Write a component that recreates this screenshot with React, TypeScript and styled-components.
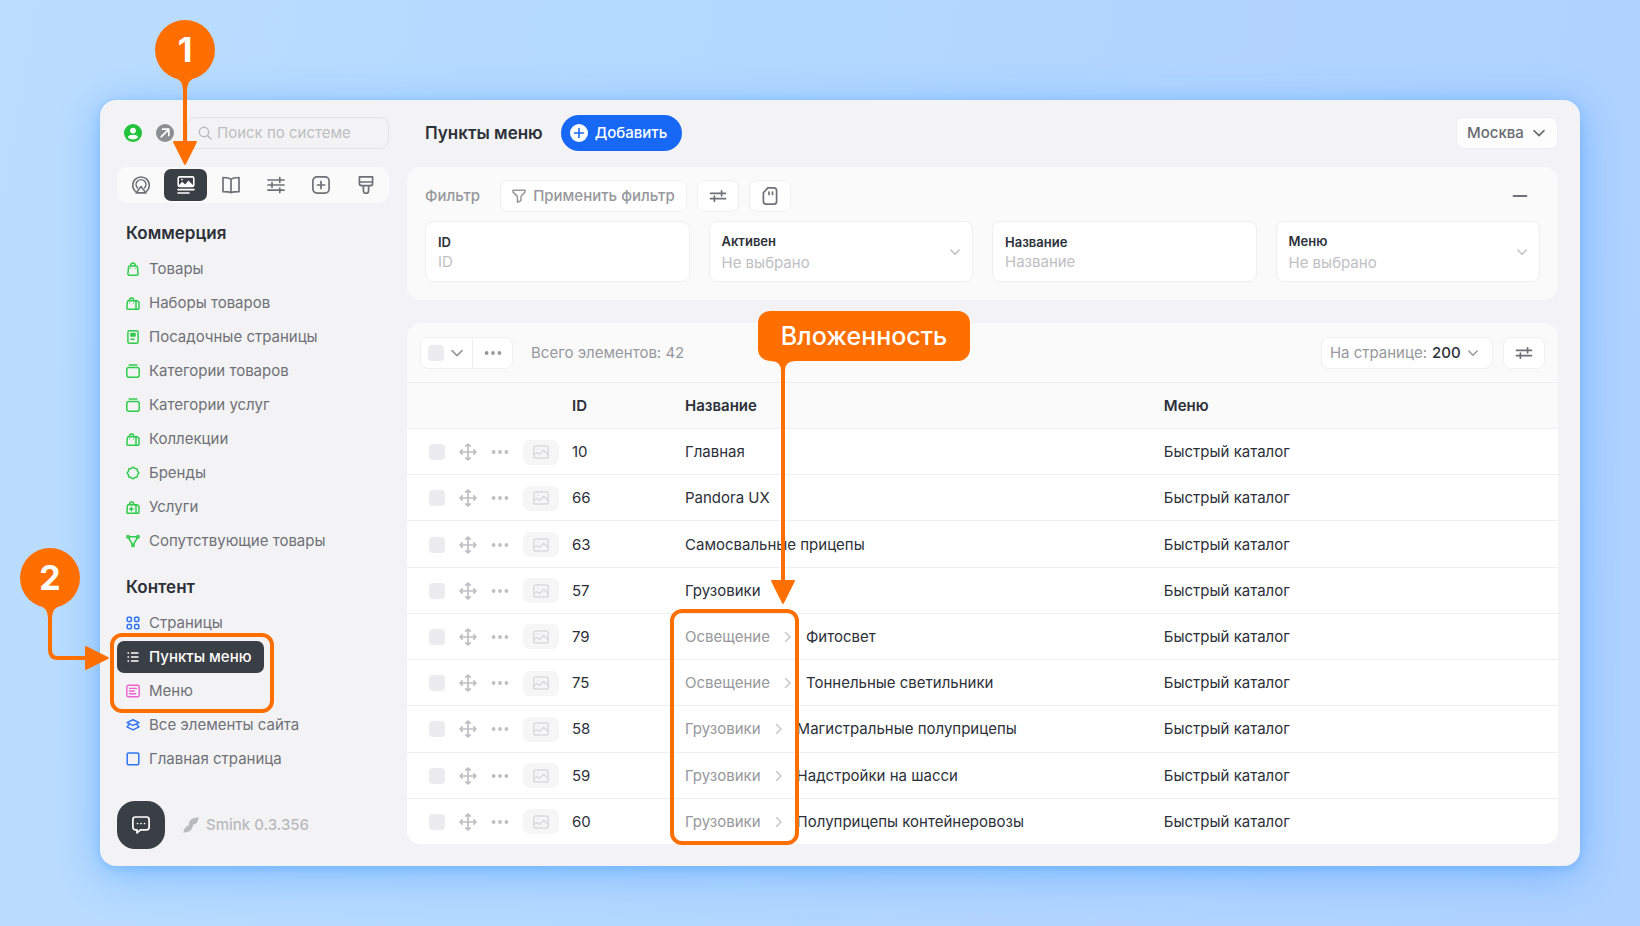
import React from 'react';
import styled, { createGlobalStyle, css } from 'styled-components';

const ORANGE = '#ff6f00';
const INK = '#2c3038';
const MUTED = '#6f7076';
const GREY = '#97989c';
const LINE = '#efeff1';
const DARK = '#3a3e45';

const GlobalStyle = createGlobalStyle`
  *, *::before, *::after { box-sizing: border-box; }
  body { margin: 0; }
  body, button, input, select {
    font-family: Inter, "Liberation Sans", sans-serif;
    font-size: 15px;
    line-height: 20px;
    color: ${INK};
  }
  button, input, select { margin: 0; padding: 0; border: 0; background: none; }
  button, select { cursor: pointer; }
  select { appearance: none; outline: none; }
  svg { display: block; flex: none; }
`;

const Page = styled.div`
  display: flex;
  min-height: 100vh;
  padding: 100px 60px 60px 100px;
  background: linear-gradient(100deg, #bbddff 0%, #b4d9ff 35%, #aed1ff 100%);
`;

const Window = styled.div`
  position: relative;
  flex: 1;
  display: grid;
  grid-template-columns: 272px minmax(0, 1fr);
  column-gap: 18px;
  padding: 14px 22px 22px 17px;
  border-radius: 16px;
  background: #f3f3f5;
  box-shadow: 0 8px 40px rgba(40, 140, 255, 0.42), 0 2px 8px rgba(40, 140, 255, 0.25);
`;

/* Sidebar */

const Sidebar = styled.aside`
  display: flex;
  flex-direction: column;
`;

const TopRow = styled.div`
  display: flex;
  align-items: center;
  height: 38px;
`;

const RoundButton = styled.button`
  display: flex;
  margin-left: 7px;
  margin-right: 7px;
`;

const SearchBox = styled.label`
  display: flex;
  flex: 1;
  min-width: 0;
  align-items: center;
  gap: 5px;
  height: 32px;
  margin-left: 6px;
  padding: 0 10px;
  border: 1px solid #e4e4e7;
  border-radius: 9px;
  color: #bdbdc1;
`;

const SearchInput = styled.input`
  flex: 1;
  min-width: 0;
  outline: none;
  &::placeholder { color: #bdbdc1; opacity: 1; }
`;

const Tabs = styled.div`
  display: flex;
  justify-content: space-between;
  margin-top: 15px;
  padding: 2px;
  border-radius: 10px;
  background: #fafafb;
`;

const Tab = styled.button<{ $active?: boolean }>`
  display: flex;
  align-items: center;
  justify-content: center;
  width: 43px;
  height: 32px;
  border-radius: 7px;
  color: ${(p) => (p.$active ? '#fff' : MUTED)};
  background: ${(p) => (p.$active ? DARK : 'none')};
`;

const Nav = styled.nav`
  display: flex;
  flex-direction: column;
`;

const NavTitle = styled.h2`
  margin: 18px 0 8px 9px;
  font-size: 17px;
  line-height: 24px;
  font-weight: 600;
`;

const NavList = styled.ul`
  display: flex;
  flex-direction: column;
  align-items: flex-start;
  gap: 2px;
  margin: 0;
  padding: 0;
  list-style: none;
`;

const NavLink = styled.a<{ $active?: boolean }>`
  display: flex;
  align-items: center;
  gap: 9px;
  height: 32px;
  padding: 0 13px 0 9px;
  border-radius: 7px;
  color: ${MUTED};
  text-decoration: none;
  ${(p) =>
    p.$active &&
    css`
      background: ${DARK};
      color: #fff;
      font-weight: 500;
    `}
`;

const SideFooter = styled.div`
  display: flex;
  align-items: center;
  gap: 18px;
  margin-top: auto;
  margin-bottom: -5px;
`;

const ChatButton = styled.button`
  display: flex;
  align-items: center;
  justify-content: center;
  width: 48px;
  height: 48px;
  border-radius: 18px;
  background: ${DARK};
  color: #fff;
`;

const Version = styled.span`
  display: flex;
  align-items: center;
  gap: 7px;
  color: #b9babd;
  font-weight: 500;
`;

/* Main column */

const Main = styled.main`
  display: flex;
  flex-direction: column;
  min-width: 0;
`;

const Header = styled.header`
  display: flex;
  align-items: center;
  gap: 18px;
  height: 38px;
  padding-left: 18px;
`;

const Title = styled.h1`
  margin: 0;
  font-size: 17px;
  line-height: 24px;
  font-weight: 600;
`;

const AddButton = styled.button`
  display: flex;
  align-items: center;
  gap: 7px;
  height: 36px;
  padding: 0 15px 0 9px;
  border-radius: 18px;
  background: #1769f5;
  color: #fff;
  font-weight: 500;
`;

const Spacer = styled.div`
  flex: 1;
`;

const SelectBox = styled.label<{ $tone?: string }>`
  display: flex;
  align-items: center;
  gap: 5px;
  height: 32px;
  padding: 0 12px 0 8px;
  border: 1px solid ${LINE};
  border-radius: 8px;
  background: #fff;
  color: ${GREY};
  select { font-weight: 500; color: ${INK}; }
`;

const CityBox = styled(SelectBox)`
  gap: 8px;
  padding: 0 11px 0 10px;
  background: #fdfdfd;
  select { color: #6a6b71; }
`;

const Panel = styled.section`
  border-radius: 14px;
  background: #fafafb;
`;

const FilterPanel = styled(Panel)`
  margin-top: 15px;
  padding: 13px 18px 18px;
`;

const FilterBar = styled.div`
  display: flex;
  align-items: center;
  gap: 10px;
  padding-right: 12px;
`;

const FilterName = styled.span`
  margin-right: 10px;
  color: ${GREY};
  font-weight: 500;
`;

const ToolButton = styled.button`
  display: flex;
  align-items: center;
  justify-content: center;
  gap: 7px;
  min-width: 40px;
  height: 32px;
  padding: 0 11px;
  border: 1px solid ${LINE};
  border-radius: 8px;
  background: #fff;
  color: ${GREY};
  font-weight: 500;
`;

const PlainButton = styled.button`
  display: flex;
  color: ${MUTED};
`;

const Fields = styled.div`
  display: grid;
  grid-template-columns: repeat(4, minmax(0, 1fr));
  gap: 19px;
  margin-top: 9px;
`;

const Field = styled.label`
  display: flex;
  align-items: center;
  height: 61px;
  padding: 0 10px 0 12px;
  border: 1px solid ${LINE};
  border-radius: 8px;
  background: #fff;
  color: #c0c0c4;
`;

const FieldBody = styled.span<{ $gap?: number }>`
  display: flex;
  flex: 1;
  min-width: 0;
  flex-direction: column;
  gap: ${(p) => p.$gap || 0}px;
  input, select { width: 100%; outline: none; color: #c0c0c4; }
  input::placeholder { color: #c0c0c4; opacity: 1; }
`;

const FieldName = styled.span`
  font-size: 13px;
  line-height: 20px;
  font-weight: 600;
  color: ${INK};
`;

const TablePanel = styled(Panel)`
  display: flex;
  flex: 1;
  flex-direction: column;
  margin-top: 23px;
  overflow: hidden;
`;

const Toolbar = styled.div`
  display: flex;
  align-items: center;
  gap: 10px;
  height: 59px;
  padding: 0 13px;
`;

const Split = styled.div`
  display: flex;
  margin-right: 8px;
  border: 1px solid ${LINE};
  border-radius: 8px;
  background: #fff;
  color: ${GREY};
`;

const SplitPart = styled.div`
  display: flex;
  align-items: center;
  gap: 6px;
  height: 30px;
  padding: 0 8px 0 7px;
  & + button { border-left: 1px solid ${LINE}; }
`;

const SplitButton = styled.button`
  display: flex;
  align-items: center;
  padding: 0 10px 0 11px;
  color: ${GREY};
`;

const Check = styled.input`
  appearance: none;
  width: 16px;
  height: 16px;
  border-radius: 4px;
  background: #ececee;
`;

const Total = styled.span`
  color: ${GREY};
`;

const Table = styled.table`
  flex: 1;
  width: 100%;
  table-layout: fixed;
  border-collapse: separate;
  border-spacing: 0;
  tbody { background: #fff; }
  th, td {
    height: 46px;
    padding: 1px 0 0;
    border-top: 1px solid ${LINE};
    text-align: left;
    vertical-align: middle;
    white-space: nowrap;
  }
  th { font-weight: 600; }
`;

const ColTools = styled.col`
  width: 165px;
`;
const ColId = styled.col`
  width: 113px;
`;
const ColName = styled.col`
  width: 41.6%;
`;

const RowTools = styled.div`
  display: flex;
  align-items: center;
  gap: 14px;
  padding-left: 22px;
  color: #bfbfc3;
`;

const Thumb = styled.span`
  display: flex;
  align-items: center;
  justify-content: center;
  width: 36px;
  height: 25px;
  border-radius: 7px;
  background: #f6f6f7;
  color: #dadadd;
`;

const Crumbs = styled.span`
  display: flex;
  align-items: center;
`;

const Parent = styled.span`
  display: flex;
  align-items: center;
  gap: 13px;
  margin-right: 13px;
  color: ${GREY};
`;

/* Callouts that lie over the window */

const Overlay = styled.div<{ $x: number; $y: number }>`
  position: absolute;
  left: ${(p) => p.$x}px;
  top: ${(p) => p.$y}px;
  pointer-events: none;
  color: ${ORANGE};
`;

const Frame = styled(Overlay)<{ $w: number; $h: number }>`
  width: ${(p) => p.$w}px;
  height: ${(p) => p.$h}px;
  border: 4px solid ${ORANGE};
  border-radius: 12px;
`;

const PinNumber = styled.span`
  position: absolute;
  left: 0;
  top: 0;
  width: 60px;
  line-height: 60px;
  text-align: center;
  font-size: 34px;
  font-weight: 700;
  color: #fff;
`;

const Tip = styled.div`
  width: 212px;
  border-radius: 12px;
  background: ${ORANGE};
  color: #fff;
  font-size: 25px;
  line-height: 50px;
  font-weight: 500;
  text-align: center;
`;

const TipTail = styled.svg`
  margin-left: 13px;
`;

/* Icons */

type IconProps = { size?: number; color?: string; width?: number; children: React.ReactNode };

const Icon = ({ size = 18, color = 'currentColor', width = 1.6, children }: IconProps) => (
  <svg
    width={size}
    height={size}
    viewBox={`0 0 ${size} ${size}`}
    fill="none"
    stroke={color}
    strokeWidth={width}
    strokeLinecap="round"
    strokeLinejoin="round"
    aria-hidden="true"
  >
    {children}
  </svg>
);

const Chevron = ({ color }: { color?: string }) => (
  <Icon size={14} color={color} width={1.6}>
    <path d="M2 4.600 7 9.600l5-5" />
  </Icon>
);

const SmallChevron = ({ color }: { color?: string }) => (
  <Icon size={14} color={color} width={1.4}>
    <path d="M2.800 5 7 9.200 11.200 5" />
  </Icon>
);

const Dots = ({ color }: { color?: string }) => (
  <Icon size={18} color={color} width={0}>
    <g fill="currentColor">
      <circle cx="2.600" cy="9" r="1.900" />
      <circle cx="9" cy="9" r="1.900" />
      <circle cx="15.400" cy="9" r="1.900" />
    </g>
  </Icon>
);

const Sliders = () => (
  <Icon width={1.7} color="#707177">
    <path d="M1.500 6.300h15M12.600 3.800v5M1.500 11.700h15M5.400 9.200v5" />
  </Icon>
);

const Move = () => (
  <Icon width={1.7}>
    <path d="M9 1.200v15.600M1.200 9h15.600M6.800 3.200 9 1l2.200 2.200M6.800 14.800 9 17l2.200-2.200M3.200 6.800 1 9l2.200 2.200M14.800 6.800 17 9l-2.200 2.200" />
  </Icon>
);

const GREEN = '#2fcb4b';
const BLUE = '#2f74f6';

const bagsBody = (
  <path d="M2.300 4.800h6.400l1.300 1.300v6.300a.8.8 0 0 1-.8.8H1.800a.9.900 0 0 1-.9-.9l.5-6.700a1 1 0 0 1 .9-.8zM3.400 4.600a2.200 2.600 0 0 1 4.400 0M9.400 4.800h1.900l1.700 1.600v5.600a1.200 1.200 0 0 1-1.200 1.200H9.400" />
);

const glyphs: Record<string, React.ReactNode> = {
  bag: (
    <Icon size={14} color={GREEN} width={1.500}>
      <path d="M3.600 4h6.800a1 1 0 0 1 1 .9l.7 7a1.200 1.200 0 0 1-1.200 1.300H3.100a1.200 1.200 0 0 1-1.200-1.300l.7-7a1 1 0 0 1 1-.9zM4.700 3.800a2.300 2.800 0 0 1 4.600 0" />
      <path d="M4.900 6.300v.3M9.100 6.300v.3" strokeWidth="1" />
    </Icon>
  ),
  bags: (
    <Icon size={14} color={GREEN} width={1.500}>
      {bagsBody}
      <path d="M3.700 6.900v.2M7.500 6.900v.2" strokeWidth="1" />
    </Icon>
  ),
  landing: (
    <Icon size={14} color={GREEN} width={1.500}>
      <rect x="1.900" y="0.800" width="10.200" height="12.500" rx="1.600" />
      <rect x="5" y="3.600" width="4" height="2.400" fill={GREEN} />
      <path d="M5 9.300h3" />
    </Icon>
  ),
  category: (
    <Icon size={14} color={GREEN} width={1.500}>
      <rect x="0.800" y="3.600" width="12.400" height="9.600" rx="1.900" />
      <path d="M3.200 0.900h7.600" />
    </Icon>
  ),
  brand: (
    <Icon size={14} color={GREEN} width={1.500}>
      <path d="M7 1.200 8.900 2.400l2.200.5.5 2.200L12.800 7l-1.200 1.900-.5 2.200-2.200.5L7 12.800l-1.900-1.200-2.200-.5-.5-2.200L1.200 7l1.200-1.900.5-2.200 2.200-.5z" />
    </Icon>
  ),
  service: (
    <Icon size={14} color={GREEN} width={1.500}>
      {bagsBody}
      <path d="M5.400 7.300v3.400M3.700 9h3.400" />
    </Icon>
  ),
  related: (
    <Icon size={14} color={GREEN} width={1.500}>
      <circle cx="2" cy="2.800" r="1.200" />
      <circle cx="12" cy="2.800" r="1.200" />
      <circle cx="7" cy="11.400" r="1.200" />
      <path d="M3.400 2.800h7.200M2.700 4l3.600 6.200M11.300 4l-3.600 6.200" />
    </Icon>
  ),
  pages: (
    <Icon size={14} color={BLUE} width={1.500}>
      <rect x="1.200" y="1.200" width="4.200" height="4.200" rx="1" />
      <rect x="8.600" y="1.200" width="4.200" height="4.200" rx="1" />
      <rect x="1.200" y="8.600" width="4.200" height="4.200" rx="1" />
      <rect x="8.600" y="8.600" width="4.200" height="4.200" rx="1" />
    </Icon>
  ),
  list: (
    <Icon size={14} color="#fff" width={1.400}>
      <path d="M5.500 3h6.500M5.500 7h6.500M5.500 11h6.500M2 3h.6M2 7h.6M2 11h.6" />
    </Icon>
  ),
  menu: (
    <Icon size={14} color="#ee5fd0" width={1.400}>
      <rect x="0.800" y="1.200" width="12.400" height="11.600" rx="1.600" />
      <path d="M3.600 4.400h6.800M3.600 7h4.600M3.600 9.700h6" />
    </Icon>
  ),
  layers: (
    <Icon size={14} color={BLUE} width={1.500}>
      <path d="M7 1.800 13 4.600 7 7.400 1 4.600zM3.600 6 1 8.900l6 3 6-3L10.400 6" />
    </Icon>
  ),
  square: (
    <Icon size={14} color={BLUE} width={1.500}>
      <rect x="1.200" y="1" width="11.600" height="11.800" rx="1.200" />
    </Icon>
  ),
};

const commerce = [
  ['bag', 'Товары'],
  ['bags', 'Наборы товаров'],
  ['landing', 'Посадочные страницы'],
  ['category', 'Категории товаров'],
  ['category', 'Категории услуг'],
  ['bags', 'Коллекции'],
  ['brand', 'Бренды'],
  ['service', 'Услуги'],
  ['related', 'Сопутствующие товары'],
];

const content = [
  ['pages', 'Страницы'],
  ['list', 'Пункты меню'],
  ['menu', 'Меню'],
  ['layers', 'Все элементы сайта'],
  ['square', 'Главная страница'],
];

const rows: { id: number; name: string; parent?: string }[] = [
  { id: 10, name: 'Главная' },
  { id: 66, name: 'Pandora UX' },
  { id: 63, name: 'Самосвальные прицепы' },
  { id: 57, name: 'Грузовики' },
  { id: 79, parent: 'Освещение', name: 'Фитосвет' },
  { id: 75, parent: 'Освещение', name: 'Тоннельные светильники' },
  { id: 58, parent: 'Грузовики', name: 'Магистральные полуприцепы' },
  { id: 59, parent: 'Грузовики', name: 'Надстройки на шасси' },
  { id: 60, parent: 'Грузовики', name: 'Полуприцепы контейнеровозы' },
];

const NavSection = ({ title, items, active }: { title: string; items: string[][]; active?: string }) => (
  <Nav aria-label={title}>
    <NavTitle>{title}</NavTitle>
    <NavList>
      {items.map(([icon, text]) => (
        <li key={text}>
          <NavLink href="#" $active={text === active}>
            {glyphs[icon]}
            {text}
          </NavLink>
        </li>
      ))}
    </NavList>
  </Nav>
);

const TextField = ({ name }: { name: string }) => (
  <Field>
    <FieldBody>
      <FieldName>{name}</FieldName>
      <input type="text" placeholder={name} />
    </FieldBody>
  </Field>
);

const SelectField = ({ name }: { name: string }) => (
  <Field>
    <FieldBody $gap={2}>
      <FieldName>{name}</FieldName>
      <select>
        <option>Не выбрано</option>
      </select>
    </FieldBody>
    <SmallChevron />
  </Field>
);

export default function App() {
  return (
    <>
      <GlobalStyle />
      <Page>
        <Window>
          <Sidebar>
            <TopRow>
              <RoundButton aria-label="Профиль">
                <svg width="18" height="18" viewBox="0 0 18 18" aria-hidden="true">
                  <circle cx="9" cy="9" r="9" fill="#20c339" />
                  <circle cx="9" cy="6.600" r="2.900" fill="#fff" />
                  <path d="M3.800 13.200c.6-1.700 2.600-2.500 5.200-2.500s4.600.8 5.200 2.500c-1.200 1.400-3 2.200-5.200 2.200s-4-.8-5.200-2.200z" fill="#fff" />
                </svg>
              </RoundButton>
              <RoundButton aria-label="Открыть сайт">
                <svg width="18" height="18" viewBox="0 0 18 18" fill="none" stroke="#fff" strokeWidth="1.700" strokeLinecap="round" strokeLinejoin="round" aria-hidden="true">
                  <circle cx="9" cy="9" r="9" fill="#8d8e92" stroke="none" />
                  <path d="M5.200 12.800 12.600 5.400M6.600 5.200h6.200v6.200" />
                </svg>
              </RoundButton>
              <SearchBox>
                <Icon size={14} width={1.500}>
                  <circle cx="6" cy="6" r="4.700" />
                  <path d="m9.600 9.600 3.400 3.400" />
                </Icon>
                <SearchInput type="text" placeholder="Поиск по системе" aria-label="Поиск по системе" />
              </SearchBox>
            </TopRow>

            <Tabs>
              <Tab aria-label="Обзор">
                <Icon width={1.600}>
                  <path d="M3.200 15.200a8.300 8.300 0 1 1 11.600 0M5.300 11.800a4.900 4.900 0 1 1 7.400 0M9 10.600l5 6.300H4z" />
                </Icon>
              </Tab>
              <Tab aria-label="Контент" $active>
                <Icon width={1.600}>
                  <rect x="1.200" y="0.900" width="15.600" height="9.600" rx="1.600" />
                  <path d="m1.600 9.400 3.600-3.600 3 2.600 3.200-4 5 5v1.200h-14.400z" fill="currentColor" stroke="none" />
                  <path d="M4.900 3.600h.2M1 13.600h16M1 17h11" />
                </Icon>
              </Tab>
              <Tab aria-label="Справочники">
                <Icon width={1.700}>
                  <path d="M9 3.400v13M9 3.400C7.600 2 5 1.500 1 1.500v14.200c4 0 6.600.1 8 1 1.400-.9 4-1 8-1V1.500c-4 0-6.600.5-8 1.900z" />
                </Icon>
              </Tab>
              <Tab aria-label="Настройки">
                <Icon width={1.700}>
                  <path d="M1 4h16M12.800 1.700v4.600M1 9h16M5 6.700v4.600M1 14.200h16M12.800 12v4.600" />
                </Icon>
              </Tab>
              <Tab aria-label="Модули">
                <Icon width={1.700}>
                  <rect x="0.900" y="0.900" width="16.200" height="16.200" rx="4" />
                  <path d="M9 5.400v7.200M5.400 9h7.200" />
                </Icon>
              </Tab>
              <Tab aria-label="Оформление">
                <Icon width={1.700}>
                  <path d="M2.400 0.900h13.200v6.700a2 2 0 0 1-2 2h-2v5.200a2.600 2.600 0 0 1-5.200 0V9.600h-2a2 2 0 0 1-2-2zM2.400 6h13.200M6 9.600h6" />
                </Icon>
              </Tab>
            </Tabs>

            <NavSection title="Коммерция" items={commerce} />
            <NavSection title="Контент" items={content} active="Пункты меню" />

            <SideFooter>
              <ChatButton aria-label="Чат">
                <Icon size={20} width={1.700}>
                  <path d="M4.500 2h11A2.600 2.600 0 0 1 18.100 4.600v7.600a2.600 2.600 0 0 1-2.600 2.600H9.400L6 17.900v-3.100H4.500a2.600 2.600 0 0 1-2.600-2.600V4.600A2.600 2.600 0 0 1 4.500 2z" />
                  <path d="M6.500 8.500h.1M10 8.500h.1M13.500 8.500h.1" />
                </Icon>
              </ChatButton>
              <Version>
                <svg width="16" height="16" viewBox="0 0 16 16" fill="#b9babd" aria-hidden="true">
                  <path d="M15.800.4C11 .6 7.400 1.600 6.200 5.200L5.400 8.400c5-.2 8.200-1 9.400-4.600zM10.200 8C5.400 8.200 3 9 1.600 11.600L.2 15.800c4.600-.4 7.400-1.200 8.800-4.200z" />
                </svg>
                Smink 0.3.356
              </Version>
            </SideFooter>
          </Sidebar>

          <Main>
            <Header>
              <Title>Пункты меню</Title>
              <AddButton>
                <svg width="18" height="18" viewBox="0 0 18 18" fill="none" aria-hidden="true">
                  <circle cx="9" cy="9" r="9" fill="#fff" />
                  <path d="M9 4.500v9M4.500 9h9" stroke="#1769f5" strokeWidth="1.600" strokeLinecap="round" />
                </svg>
                Добавить
              </AddButton>
              <Spacer />
              <CityBox>
                <select aria-label="Город">
                  <option>Москва</option>
                </select>
                <Chevron color="#6a6b71" />
              </CityBox>
            </Header>

            <FilterPanel aria-label="Фильтр">
              <FilterBar>
                <FilterName>Фильтр</FilterName>
                <ToolButton>
                  <Icon size={14} width={1.500}>
                    <path d="M1 1.200h12v1.900L9 7.400v4.200l-3.600 1.600V7.400L1 3.100z" />
                  </Icon>
                  Применить фильтр
                </ToolButton>
                <ToolButton aria-label="Настроить фильтр">
                  <Sliders />
                </ToolButton>
                <ToolButton aria-label="Сохранить фильтр">
                  <Icon color="#707177" width={1.700}>
                    <path d="M6.800 0.900h6.200a2.600 2.600 0 0 1 2.600 2.600v11a2.600 2.600 0 0 1-2.600 2.600H5a2.600 2.600 0 0 1-2.600-2.600V5.800zM8 5v2.400M11.500 5v2.400" />
                  </Icon>
                </ToolButton>
                <Spacer />
                <PlainButton aria-label="Свернуть">
                  <Icon size={16} width={1.800}>
                    <path d="M1.500 8h13" />
                  </Icon>
                </PlainButton>
              </FilterBar>
              <Fields>
                <TextField name="ID" />
                <SelectField name="Активен" />
                <TextField name="Название" />
                <SelectField name="Меню" />
              </Fields>
            </FilterPanel>

            <TablePanel aria-label="Список">
              <Toolbar>
                <Split>
                  <SplitPart>
                    <Check type="checkbox" aria-label="Выбрать все" />
                    <Chevron />
                  </SplitPart>
                  <SplitButton aria-label="Действия">
                    <Dots />
                  </SplitButton>
                </Split>
                <Total>Всего элементов: 42</Total>
                <Spacer />
                <SelectBox>
                  На странице:
                  <select>
                    <option>200</option>
                  </select>
                  <SmallChevron />
                </SelectBox>
                <ToolButton aria-label="Настроить таблицу">
                  <Sliders />
                </ToolButton>
              </Toolbar>
              <Table>
                <colgroup>
                  <ColTools />
                  <ColId />
                  <ColName />
                  <col />
                </colgroup>
                <thead>
                  <tr>
                    <td />
                    <th scope="col">ID</th>
                    <th scope="col">Название</th>
                    <th scope="col">Меню</th>
                  </tr>
                </thead>
                <tbody>
                  {rows.map((row) => (
                    <tr key={row.id}>
                      <td>
                        <RowTools>
                          <Check type="checkbox" aria-label={`Выбрать ${row.name}`} />
                          <Move />
                          <Dots />
                          <Thumb>
                            <Icon size={16} width={1.500}>
                              <rect x="0.800" y="2" width="14.400" height="12" rx="1.800" />
                              <path d="m1 10.500 3-2 2.500 2 4.200-4.300 4.300 4.300M5 5.300h.1" />
                            </Icon>
                          </Thumb>
                        </RowTools>
                      </td>
                      <td>{row.id}</td>
                      <td>
                        <Crumbs>
                          {row.parent && (
                            <Parent>
                              {row.parent}
                              <Icon size={10} width={1.400} color="#c4c4c8">
                                <path d="m2.500 0.500 4.500 4.500-4.500 4.500" />
                              </Icon>
                            </Parent>
                          )}
                          {row.name}
                        </Crumbs>
                      </td>
                      <td>Быстрый каталог</td>
                    </tr>
                  ))}
                </tbody>
              </Table>
            </TablePanel>
          </Main>

          <Overlay $x={55} $y={-80}>
            <svg width="60" height="145" viewBox="0 0 60 145" fill="currentColor" aria-hidden="true">
              <circle cx="30" cy="30" r="30" />
              <path d="M18 56q10 4 10 14v55h4V70q0-10 10-14z" />
              <path d="M18 122q0-1 1-1h22q1 0 1 1L31 144q-1 2-2 0z" />
            </svg>
            <PinNumber>1</PinNumber>
          </Overlay>

          <Overlay $x={-80} $y={448}>
            <svg width="90" height="124" viewBox="0 0 90 124" fill="currentColor" aria-hidden="true">
              <circle cx="30" cy="30" r="30" />
              <path d="M18 56q10 4 10 14h4q0-10 10-14z" />
              <path d="M30 66v36q0 8 8 8h30" fill="none" stroke="currentColor" strokeWidth="4" />
              <path d="M66 98q-1 0-1 1v22q0 1 1 1l22-11q2-1 0-2z" />
            </svg>
            <PinNumber>2</PinNumber>
          </Overlay>

          <Frame $x={10} $y={533} $w={164} $h={80} />
          <Frame $x={570} $y={509} $w={129} $h={236} />

          <Overlay $x={658} $y={211}>
            <Tip>Вложенность</Tip>
            <TipTail width="24" height="243" viewBox="0 0 24 243" fill="currentColor" aria-hidden="true">
              <path d="M0 0q10 0 10 10v215h4V10q0-10 10-10z" />
              <path d="M0 220q0-1 1-1h22q1 0 1 1L13 242q-1 2-2 0z" />
            </TipTail>
          </Overlay>
        </Window>
      </Page>
    </>
  );
}
